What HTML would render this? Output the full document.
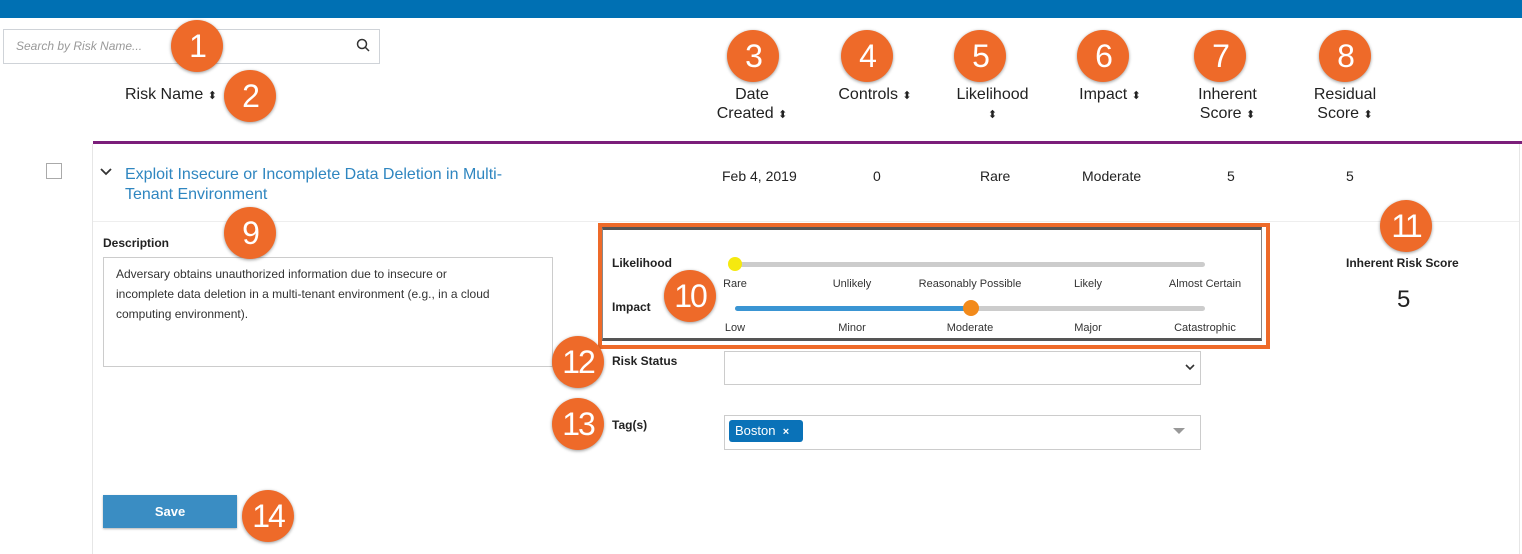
<!DOCTYPE html>
<html><head><style>
body{margin:0;width:1522px;height:554px;background:#fff;font-family:"Liberation Sans",sans-serif;position:relative;overflow:hidden;color:#222}
.a{position:absolute}
.b{position:absolute;width:52px;height:52px;border-radius:50%;background:#ee6a29;color:#fff;font-size:32px;text-align:center;line-height:52px;box-shadow:0 1px 3px rgba(0,0,0,.4);transform:translate(-26px,-26px);letter-spacing:-2px}
.h{position:absolute;font-size:16px;text-align:center;line-height:19px;color:#222}
.s{font-size:11px}
.t{position:absolute;font-size:14px;color:#222}
.lab{position:absolute;font-size:11px;color:#333;transform:translateX(-50%)}
.bold{font-weight:bold;font-size:12px;position:absolute}
</style></head><body>
<div class="a" style="left:0;top:0;width:1522px;height:18px;background:#0070b3"></div>
<div class="a" style="left:3px;top:29px;width:375px;height:33px;border:1px solid #cfd3d8"></div>
<div class="a" style="left:16px;top:39px;font-size:12px;color:#999;font-style:italic">Search by Risk Name...</div>
<svg class="a" style="left:356px;top:38px" width="14" height="14"><circle cx="6" cy="6" r="4.5" fill="none" stroke="#333" stroke-width="1.5"/><line x1="9.5" y1="9.5" x2="13" y2="13" stroke="#333" stroke-width="1.5"/></svg>
<div class="h" style="left:125px;top:85px">Risk Name <span class="s">⬍</span></div>
<div class="h" style="left:712px;top:85px;width:80px">Date<br>Created <span class="s">⬍</span></div>
<div class="h" style="left:830px;top:85px;width:90px">Controls <span class="s">⬍</span></div>
<div class="h" style="left:945px;top:85px;width:95px">Likelihood<br><span class="s">⬍</span></div>
<div class="h" style="left:1065px;top:85px;width:90px">Impact <span class="s">⬍</span></div>
<div class="h" style="left:1185px;top:85px;width:85px">Inherent<br>Score <span class="s">⬍</span></div>
<div class="h" style="left:1300px;top:85px;width:90px">Residual<br>Score <span class="s">⬍</span></div>
<div class="a" style="left:93px;top:141px;width:1429px;height:3px;background:#7b1e7a"></div>
<div class="a" style="left:92px;top:144px;width:1px;height:410px;background:#e6e6e6"></div>
<div class="a" style="left:1519px;top:144px;width:1px;height:410px;background:#e6e6e6"></div>
<div class="a" style="left:93px;top:221px;width:1426px;height:1px;background:#eee"></div>
<div class="a" style="left:46px;top:163px;width:14px;height:14px;border:1px solid #aaa"></div>
<svg class="a" style="left:100px;top:168px" width="12" height="9"><polyline points="1,1 6,6 11,1" fill="none" stroke="#333" stroke-width="1.8"/></svg>
<div class="a" style="left:125px;top:165px;font-size:16px;color:#2f86c0;line-height:20px;width:420px">Exploit Insecure or Incomplete Data Deletion in Multi-<br>Tenant Environment</div>
<div class="t" style="left:722px;top:168px">Feb 4, 2019</div>
<div class="t" style="left:873px;top:168px">0</div>
<div class="t" style="left:980px;top:168px">Rare</div>
<div class="t" style="left:1082px;top:168px">Moderate</div>
<div class="t" style="left:1227px;top:168px">5</div>
<div class="t" style="left:1346px;top:168px">5</div>
<div class="bold" style="left:103px;top:236px">Description</div>
<div class="a" style="left:103px;top:257px;width:424px;height:96px;border:1px solid #ccc;padding:6px 12px;font-size:12px;line-height:20px;color:#333">Adversary obtains unauthorized information due to insecure or<br>incomplete data deletion in a multi-tenant environment (e.g., in a cloud<br>computing environment).</div>
<div class="a" style="left:598px;top:223px;width:664px;height:118px;border:4px solid #ee6a29;"></div>
<div class="a" style="left:602px;top:227px;width:660px;height:114px;border-top:3px solid #555;border-bottom:3px solid #555;box-sizing:border-box;border-left:1px solid #888;border-right:1px solid #888"></div>
<div class="bold" style="left:612px;top:256px">Likelihood</div>
<div class="bold" style="left:612px;top:300px">Impact</div>
<div class="a" style="left:735px;top:262px;width:470px;height:5px;border-radius:3px;background:#ccc"></div>
<div class="a" style="left:728px;top:257px;width:14px;height:14px;border-radius:50%;background:#f5e90f"></div>
<div class="a" style="left:735px;top:306px;width:470px;height:5px;border-radius:3px;background:#ccc"></div>
<div class="a" style="left:735px;top:306px;width:236px;height:5px;border-radius:3px;background:#3a95d3"></div>
<div class="a" style="left:963px;top:300px;width:16px;height:16px;border-radius:50%;background:#f28a1b"></div>
<div class="lab" style="left:735px;top:278px">Rare</div><div class="lab" style="left:852px;top:278px">Unlikely</div><div class="lab" style="left:970px;top:278px">Reasonably Possible</div><div class="lab" style="left:1088px;top:278px">Likely</div><div class="lab" style="left:1205px;top:278px">Almost Certain</div>
<div class="lab" style="left:735px;top:322px">Low</div><div class="lab" style="left:852px;top:322px">Minor</div><div class="lab" style="left:970px;top:322px">Moderate</div><div class="lab" style="left:1088px;top:322px">Major</div><div class="lab" style="left:1205px;top:322px">Catastrophic</div>
<div class="bold" style="left:1346px;top:256px">Inherent Risk Score</div>
<div class="a" style="left:1397px;top:286px;font-size:24px">5</div>
<div class="bold" style="left:612px;top:354px">Risk Status</div>
<div class="a" style="left:724px;top:351px;width:475px;height:32px;border:1px solid #ccc"></div>
<svg class="a" style="left:1185px;top:364px" width="10" height="7"><polyline points="1,1 5,5 9,1" fill="none" stroke="#333" stroke-width="1.6"/></svg>
<div class="bold" style="left:612px;top:418px">Tag(s)</div>
<div class="a" style="left:724px;top:415px;width:475px;height:33px;border:1px solid #ccc"></div>
<div class="a" style="left:729px;top:420px;width:74px;height:22px;background:#0a72b8;border-radius:3px;color:#fff;font-size:13px;line-height:22px;padding-left:6px;box-sizing:border-box">Boston &nbsp;<b style="font-size:11px">×</b></div>
<svg class="a" style="left:1173px;top:428px" width="12" height="7"><polygon points="0,0 12,0 6,6" fill="#999"/></svg>
<div class="a" style="left:103px;top:495px;width:134px;height:33px;background:#3a8dc3;color:#fff;font-size:13px;font-weight:bold;text-align:center;line-height:33px;box-shadow:0 1px 2px rgba(0,0,0,.3)">Save</div>
<div class="b" style="left:197px;top:46px">1</div>
<div class="b" style="left:250px;top:96px">2</div>
<div class="b" style="left:753px;top:56px">3</div>
<div class="b" style="left:867px;top:56px">4</div>
<div class="b" style="left:980px;top:56px">5</div>
<div class="b" style="left:1103px;top:56px">6</div>
<div class="b" style="left:1220px;top:56px">7</div>
<div class="b" style="left:1345px;top:56px">8</div>
<div class="b" style="left:250px;top:233px">9</div>
<div class="b" style="left:690px;top:296px">10</div>
<div class="b" style="left:1406px;top:226px">11</div>
<div class="b" style="left:578px;top:362px">12</div>
<div class="b" style="left:578px;top:424px">13</div>
<div class="b" style="left:268px;top:516px">14</div>
</body></html>
